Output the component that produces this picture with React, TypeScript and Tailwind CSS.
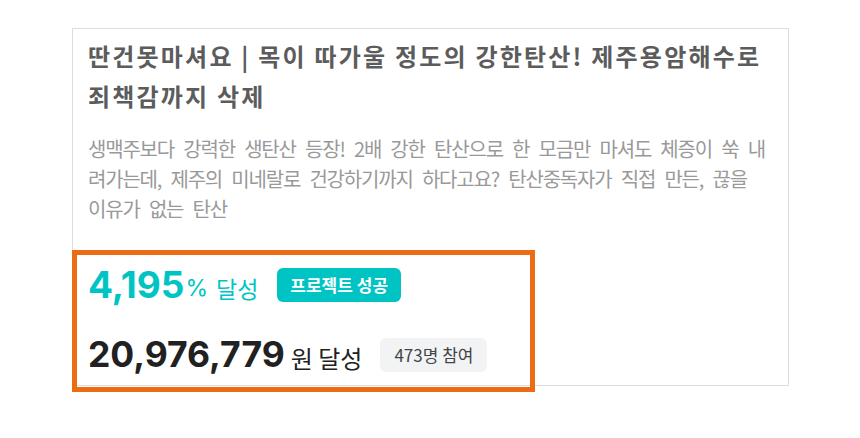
import React from 'react';

const project = {
  title: '딴건못마셔요 | 목이 따가울 정도의 강한탄산! 제주용암해수로 죄책감까지 삭제',
  summary:
    '생맥주보다 강력한 생탄산 등장! 2배 강한 탄산으로 한 모금만 마셔도 체증이 쑥 내려가는데, 제주의 미네랄로 건강하기까지 하다고요? 탄산중독자가 직접 만든, 끊을 이유가 없는 탄산',
  rate: 4195,
  amount: 20976779,
  supporters: 473,
};

function App() {
  return (
    <div className="min-h-screen bg-white font-['Noto_Sans_CJK_KR','Noto_Sans',sans-serif]">
      <div className="pl-[72px] pt-[28px]">
        <div className="relative w-[717px] border border-[#dddddd] px-[15px] pt-[7px] pb-[13px]">
          <h2 className="text-[24px] leading-[40px] font-bold tracking-[2.2px] text-[#5c5c5c]">
            {project.title}
          </h2>
          <p className="mt-[18px] text-[20px] leading-[30px] tracking-[-1.2px] [word-spacing:6px] text-[#999999]">
            {project.summary}
          </p>

          <div className="mt-[44px] flex items-center h-[34px]">
            <span className="font-['Inter','Noto_Sans_CJK_KR',sans-serif] text-[37px] font-bold text-[#00c4c4]">
              {project.rate.toLocaleString()}
            </span>
            <span className="ml-[1px] mt-[6px] font-['Inter',sans-serif] text-[23px] text-[#00c4c4]">%</span>
            <span className="ml-[8px] mt-[6px] text-[23px] text-[#00c4c4]">달성</span>
            <span className="ml-[19px] flex h-[34px] items-center rounded-[6px] bg-[#00c4c4] px-[13px] text-[17px] font-bold text-white">
              프로젝트 성공
            </span>
          </div>

          <div className="mt-[36px] flex items-center h-[34px]">
            <span className="font-['Inter','Noto_Sans_CJK_KR',sans-serif] text-[35.5px] font-bold text-[#212121]">
              {project.amount.toLocaleString()}
            </span>
            <span className="ml-[6px] mt-[6px] text-[24px] text-[#212121]">원 달성</span>
            <span className="ml-[18px] flex h-[34px] items-center rounded-[6px] bg-[#f2f3f5] px-[14px] text-[17px] text-[#444444]">
              {project.supporters}명 참여
            </span>
          </div>

          <div className="pointer-events-none absolute left-[-1px] top-[221px] h-[142px] w-[463px] border-[5px] border-[#ec6c13]" />
        </div>
      </div>
    </div>
  );
}

export default App;
